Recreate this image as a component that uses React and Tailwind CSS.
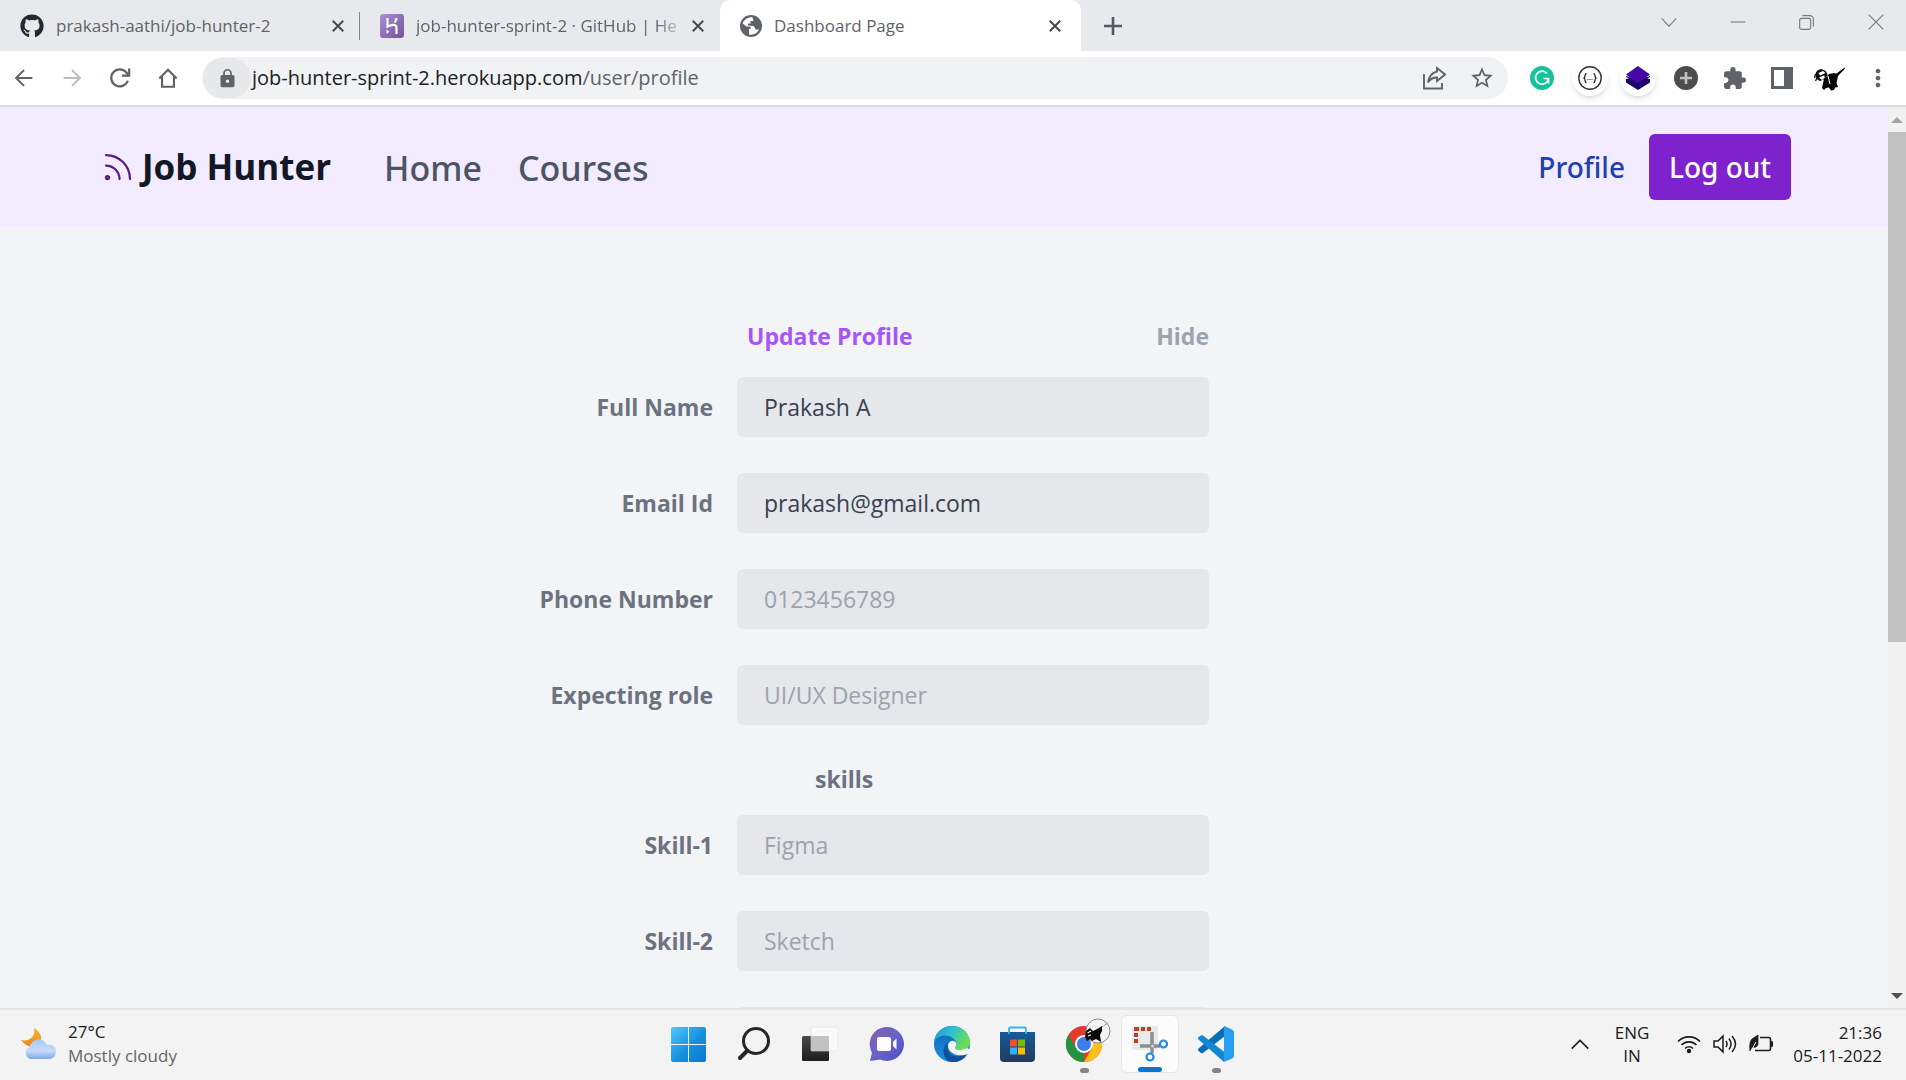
import React from "react";
import { Rss } from "lucide-react";
import { FaGithub } from "react-icons/fa";
import { MdLock, MdExtension, MdMoreVert, MdStarBorder } from "react-icons/md";

function Glyph({ d, size = 20, w = 2 }) {
  return (
    <svg width={size} height={size} viewBox="0 0 24 24" fill="none" stroke="currentColor" strokeWidth={w} aria-hidden="true">
      <path d={d} />
    </svg>
  );
}

const CROSS = "M5 5L19 19M19 5L5 19";

function HerokuIcon() {
  return (
    <svg width="24" height="24" viewBox="0 0 24 24" className="shrink-0" aria-hidden="true">
      <defs>
        <linearGradient id="hk" x1="0" y1="0" x2="1" y2="1">
          <stop offset="0" stopColor="#a98fd0" />
          <stop offset="1" stopColor="#75519e" />
        </linearGradient>
      </defs>
      <rect width="24" height="24" rx="3" fill="url(#hk)" />
      <path d="M7.5 4V12.5C11 11 16.5 9.5 16.5 13.5V20" fill="none" stroke="#fff" strokeWidth="2.2" />
      <path d="M16.5 4C16.5 6 15.5 7.5 14.5 8.5" fill="none" stroke="#fff" strokeWidth="2.2" />
      <path d="M6.5 15.5L9.5 17.8L6.5 20Z" fill="#fff" />
    </svg>
  );
}

function GlobeIcon() {
  return (
    <svg width="22" height="22" viewBox="0 0 22 22" className="shrink-0" aria-hidden="true">
      <circle cx="11" cy="11" r="11" fill="#5f6368" />
      <path d="M12.5 2.2C8 1.8 3.8 4.5 2.6 8.5L6.5 11.5H10.5V14H9V19.5C13 20.5 17.5 18 19 14.5H15.5C15 13.5 14.8 11.5 13 11L8 10.5V8.5H10.5V6H13.5Z" fill="#fff" />
    </svg>
  );
}

function Tab({ icon, title, active, fade, divider }) {
  return (
    <div className={active ? "flex h-full w-[361px] items-center rounded-t-[10px] bg-white pl-5 pr-4" : "relative flex h-full w-[360px] items-center pl-5 pr-3"}>
      {icon}
      <span className={fade ? "ml-3 flex-1 overflow-hidden whitespace-nowrap [mask-image:linear-gradient(to_right,black_88%,transparent)]" : "ml-3 flex-1 overflow-hidden whitespace-nowrap"}>{title}</span>
      <button aria-label="Close tab" className="flex size-5 shrink-0 items-center justify-center text-[#45484c]">
        <Glyph d={CROSS} size={18} w={2.6} />
      </button>
      {divider && <span className="absolute right-0 top-3 h-7 w-px bg-[#80858b]" />}
    </div>
  );
}

function TabStrip() {
  return (
    <div className="flex h-[51px] items-center bg-[#e8e9ed] text-[17px] text-[#5f6368]">
      <Tab icon={<FaGithub size={24} color="#24292f" className="shrink-0" />} title="prakash-aathi/job-hunter-2" divider />
      <Tab icon={<HerokuIcon />} title="job-hunter-sprint-2 · GitHub | He" fade />
      <Tab icon={<GlobeIcon />} title="Dashboard Page" active />
      <button aria-label="New tab" className="ml-5 flex size-6 items-center justify-center text-[#55585c]">
        <Glyph d="M12 3V21M3 12H21" size={24} w={2.6} />
      </button>
      <div className="ml-auto flex items-center gap-[9px] pb-2 text-[#74777b]">
        <button aria-label="Search tabs" className="flex w-[60px] justify-center"><Glyph d="M4 8L12 16.5L20 8" size={22} w={1.2} /></button>
        <button aria-label="Minimize" className="flex w-[60px] justify-center"><Glyph d="M4 12H20" size={22} w={1.2} /></button>
        <button aria-label="Restore" className="flex w-[60px] justify-center">
          <Glyph d="M6 8H14A2 2 0 0 1 16 10V18A2 2 0 0 1 14 20H6A2 2 0 0 1 4 18V10A2 2 0 0 1 6 8ZM7 5H15A4 4 0 0 1 19 9V17" size={22} w={1.2} />
        </button>
        <button aria-label="Close" className="flex w-[60px] justify-center"><Glyph d="M4 4L20 20M20 4L4 20" size={22} w={1.2} /></button>
      </div>
    </div>
  );
}

function Ninja() {
  return (
    <svg width="32" height="32" viewBox="0 0 32 32" aria-hidden="true">
      <path d="M30.5 5.5L22 11.5L20 11L15 12L10 17L8 26L10 28L12 26L15 25.5L17 28.5L20 28L21 25.5L24 25L22.500 21L24 14L31 6.5Z" fill="#050505" />
      <path d="M1.5 13C1.5 9 5 6.5 8.5 7.5C11.5 8 13 10 13.5 13L11 17L6 19C3 18 1.5 16 1.5 13Z" fill="#111" />
      <path d="M4.5 11L9 9L11.5 11L6 13.5ZM5 15.5L10 13.5L11 15.5L8 18Z" fill="#fff" />
      <path d="M14 14L16 22" stroke="#fff" strokeWidth="1" />
      <path d="M22 11L30 5" stroke="#fff" strokeWidth="1.2" />
      <path d="M1.5 12L.5 16M3 16L1.5 19" stroke="#222" strokeWidth="1.4" />
    </svg>
  );
}

function Toolbar() {
  const nav = "flex w-12 justify-center text-[#5f6368]";
  return (
    <div className="flex h-14 shrink-0 items-center border-b-2 border-[#dadbe3] bg-white">
      <button aria-label="Back" className={nav}><Glyph d="M22 12H3M12 2.5L2.5 12L12 21.5" size={20} w={2.4} /></button>
      <button aria-label="Forward" className="flex w-12 justify-center text-[#babcbe]"><Glyph d="M2 12H21M12 2.5L21.5 12L12 21.5" size={20} w={2.4} /></button>
      <button aria-label="Reload" className={nav}><Glyph d="M20.5 15A9.3 9.3 0 1 1 19 6L21 8.5M22 1.5V9.3H14" size={22} w={2.4} /></button>
      <button aria-label="Home" className={nav}><Glyph d="M2.5 12.5L12 3L21.5 12.5M5.5 10V21.5H18.5V10" size={22} w={2.3} /></button>
      <div className="ml-[10px] flex h-[42px] flex-1 items-center rounded-full bg-[#f0f2f4] pr-[14px]">
        <button aria-label="Site information" className="ml-px flex h-10 w-12 shrink-0 items-center justify-center rounded-full bg-[#e6e8ea] text-[#5f6368]">
          <MdLock size={21} />
        </button>
        <button className="flex-1 cursor-text pl-px text-left text-[20px] text-[#202124]">job-hunter-sprint-2.herokuapp.com<span className="text-[#5f6368]">/user/profile</span></button>
        <button aria-label="Share" className="mr-3 flex w-12 shrink-0 justify-center text-[#5f6368]">
          <Glyph d="M2 8V22.5H20V17M15 2L23 8.5L15 15V11.5C11 11.5 8 13 6 16.5C7 10 10.5 6.5 15 5.5Z" size={24} w={1.9} />
        </button>
        <button aria-label="Bookmark" className="flex w-6 shrink-0 justify-center text-[#5f6368]"><MdStarBorder size={26} className="shrink-0" /></button>
      </div>
      <div className="ml-[10px] mr-1 flex items-center text-[#5f6368]">
        <button aria-label="Grammar checker" className="flex w-12 justify-center">
          <svg width="24" height="24" viewBox="0 0 24 24" fill="none">
            <circle cx="12" cy="12" r="12" fill="#15c39a" />
            <path d="M17 7.5A6.5 6.5 0 1 0 18.5 12.5H13.5M18.5 12.5V17.5" stroke="#fff" strokeWidth="1.7" />
          </svg>
        </button>
        <button aria-label="JSON viewer" className="flex w-12 justify-center">
          <svg width="36" height="36" viewBox="0 0 36 36" fill="none" className="rounded-full bg-white shadow-md">
            <circle cx="18" cy="18" r="11.2" stroke="#333" strokeWidth="1.4" />
            <path d="M14.5 13.5C12 13.5 14 17 12 18C14 19 12 22.5 14.5 22.5M21.5 13.5C24 13.5 22 17 24 18C22 19 24 22.5 21.5 22.5" stroke="#222" strokeWidth="1.3" />
            <path d="M15.5 19.5H16.5M17.5 19.5H18.5M19.5 19.5H20.5" stroke="#222" strokeWidth="1.2" />
          </svg>
        </button>
        <button aria-label="Layers" className="flex w-12 justify-center">
          <svg width="36" height="36" viewBox="0 0 36 36" className="rounded-full bg-white shadow-md">
            <path d="M6 16V22.5L18 30L30 22.5V16L18 20Z" fill="#1d0068" />
            <path d="M6 19L9 18.5L6 17ZM30 19L27 18.5L30 17Z" fill="#fff" />
            <path d="M18 6L30 14.5L18 23.5L6 14.5Z" fill="#4607a8" />
          </svg>
        </button>
        <button aria-label="Add" className="flex w-12 justify-center">
          <svg width="24" height="24" viewBox="0 0 24 24">
            <circle cx="12" cy="12" r="12" fill="#4d4d4d" />
            <path d="M12 6V18M6 12H18" stroke="#c4c4c4" strokeWidth="2.6" />
          </svg>
        </button>
        <button aria-label="Extensions" className="flex w-12 justify-center"><MdExtension size={25} /></button>
        <button aria-label="Side panel" className="flex w-12 justify-center">
          <svg width="22" height="22" viewBox="0 0 22 22"><path d="M0 0H22V22H0ZM3 3V19H13V3Z" fill="#5f6368" fillRule="evenodd" /></svg>
        </button>
        <button aria-label="Account" className="flex w-12 justify-center"><Ninja /></button>
        <button aria-label="Menu" className="flex w-12 justify-center"><MdMoreVert size={28} /></button>
      </div>
    </div>
  );
}

function SiteNav() {
  return (
    <nav className="flex h-[120px] shrink-0 items-center bg-[#f3ebff] pl-[100px] pr-[97px] font-medium">
      <a href="#" className="flex items-center gap-[6px] text-[35px] font-bold text-[#111827]">
        <Rss size={36} strokeWidth={1.5} color="#581c87" />
        Job Hunter
      </a>
      <div className="ml-[53px] flex items-center gap-9 pt-[2px] font-['Noto_Sans','Open_Sans',sans-serif] text-[34px] text-[#4b5563]">
        <a href="#home">Home</a>
        <a href="#courses">Courses</a>
      </div>
      <div className="ml-auto flex items-center gap-6 font-['Noto_Sans','Open_Sans',sans-serif] text-[28px]">
        <a href="#profile" className="text-[#1e40af]">Profile</a>
        <button className="h-[66px] w-[142px] rounded-md bg-[#7e22ce] text-white">Log out</button>
      </div>
    </nav>
  );
}

function Field({ id, label, value, placeholder }) {
  return (
    <div className="flex h-[60px] shrink-0 items-center">
      <label htmlFor={id} className="w-1/3 pr-6 text-right font-bold text-[#6b7280]">{label}</label>
      <input id={id} type="text" defaultValue={value} placeholder={placeholder} className="h-full w-2/3 rounded-md bg-[#e5e7eb] px-[27px] text-[#374151] placeholder:text-[#9ca3af]" />
    </div>
  );
}

function ProfileForm() {
  return (
    <div className="flex-1 bg-[#f3f4f6] pr-[178px] pt-[89px]">
      <form className="mx-auto flex max-w-[708px] flex-col text-[23px]">
        <div className="mb-[21px] flex h-10 items-center justify-between pl-[246px] font-bold">
          <h1 className="text-[#a855f7]">Update Profile</h1>
          <button type="button" className="text-[#9ca3af]">Hide</button>
        </div>
        <div className="flex flex-col gap-9">
          <Field id="name" label="Full Name" value="Prakash A" />
          <Field id="email" label="Email Id" value="prakash@gmail.com" />
          <Field id="phone" label="Phone Number" placeholder="0123456789" />
          <Field id="role" label="Expecting role" placeholder="UI/UX Designer" />
        </div>
        <h2 className="mb-4 mt-[34px] flex h-10 items-center pl-[314px] font-bold text-[#6b7280]">skills</h2>
        <div className="flex flex-col gap-9">
          <Field id="s1" label="Skill-1" placeholder="Figma" />
          <Field id="s2" label="Skill-2" placeholder="Sketch" />
          <div className="h-[60px] pl-[236px]">
            <div className="h-full rounded-md bg-[#e5e7eb]" />
          </div>
        </div>
      </form>
    </div>
  );
}

function ScrollBar() {
  return (
    <div className="flex w-[18px] shrink-0 flex-col items-center bg-[#f1f1f1]">
      <button aria-label="Scroll up" className="flex h-[25px] w-full items-center justify-center">
        <svg width="12" height="6" viewBox="0 0 12 6"><path d="M0 6L6 0L12 6Z" fill="#a3a3a3" /></svg>
      </button>
      <div className="h-[510px] w-full bg-[#c1c1c1]" />
      <button aria-label="Scroll down" className="mt-auto flex h-6 w-full items-center justify-center">
        <svg width="12" height="6" viewBox="0 0 12 6"><path d="M0 0L6 6L12 0Z" fill="#505050" /></svg>
      </button>
    </div>
  );
}

function WeatherIcon() {
  return (
    <svg width="36" height="34" viewBox="0 0 36 34" aria-hidden="true">
      <defs>
        <linearGradient id="moon" x1="0" y1="0" x2="0" y2="1"><stop offset="0" stopColor="#f9b233" /><stop offset="1" stopColor="#ee8420" /></linearGradient>
        <linearGradient id="cloud" x1="0" y1="0" x2="0" y2="1"><stop offset="0" stopColor="#a9c6f5" /><stop offset=".6" stopColor="#c6dbfa" /><stop offset="1" stopColor="#7fa4e6" /></linearGradient>
      </defs>
      <path d="M13 1C19 4 22 11 19 16C16 22 6 21 0 13C8 15 15 10 13 1Z" fill="url(#moon)" />
      <path d="M10 32A6 6 0 0 1 8.5 20.5C10 14 15 12 19 12.5C23 13 25 16 26 18C32 17 35.5 21 35 25C34.5 30 31 32 28 32Z" fill="url(#cloud)" />
    </svg>
  );
}

function WindowsIcon() {
  return (
    <svg width="35" height="35" viewBox="0 0 35 35" aria-hidden="true">
      <defs><linearGradient id="win" gradientUnits="userSpaceOnUse" x1="0" y1="0" x2="35" y2="35"><stop offset="0" stopColor="#4cc9fb" /><stop offset=".55" stopColor="#1690de" /><stop offset="1" stopColor="#0a78d0" /></linearGradient></defs>
      <path d="M2 0H17V17H0V2A2 2 0 0 1 2 0ZM18 0H33A2 2 0 0 1 35 2V17H18ZM0 18H17V35H2A2 2 0 0 1 0 33ZM18 18H35V33A2 2 0 0 1 33 35H18Z" fill="url(#win)" />
    </svg>
  );
}

function SearchIcon() {
  return (
    <svg width="34" height="36" viewBox="0 0 34 36" fill="none" stroke="#262626" aria-hidden="true">
      <circle cx="19" cy="15" r="12.5" strokeWidth="3" />
      <path d="M10 25L3 32" strokeWidth="4" strokeLinecap="round" />
    </svg>
  );
}

function TaskViewIcon() {
  return (
    <svg width="36" height="36" viewBox="0 0 36 36" aria-hidden="true">
      <defs>
        <linearGradient id="tvb" x1="0" y1="0" x2="0" y2="1"><stop offset="0" stopColor="#4a4a4a" /><stop offset="1" stopColor="#1c1c1c" /></linearGradient>
      </defs>
      <rect x="0" y="10" width="27" height="25" rx="1.5" fill="url(#tvb)" />
      <rect x="9" y="1" width="27" height="24" rx="1" fill="#fafafa" stroke="#ddd" strokeWidth=".6" />
      <rect x="9" y="10" width="18" height="15" fill="#c2c2c2" />
    </svg>
  );
}

function ChatIcon() {
  return (
    <svg width="35" height="36" viewBox="0 0 35 36" aria-hidden="true">
      <defs><linearGradient id="chat" x1="0" y1="0" x2="1" y2="1"><stop offset="0" stopColor="#8561a8" /><stop offset=".5" stopColor="#6a63c8" /><stop offset="1" stopColor="#4c50c4" /></linearGradient></defs>
      <path d="M17.5 1A17 17 0 1 1 11 33.5L1 35L3 26.5A17 17 0 0 1 17.5 1Z" fill="url(#chat)" />
      <rect x="8" y="11" width="14" height="14" rx="2" fill="#fff" />
      <path d="M24 16L27.5 12.5V23.5L24 20Z" fill="#fff" />
    </svg>
  );
}

function EdgeIcon() {
  return (
    <svg width="36" height="36" viewBox="0 0 36 36" aria-hidden="true">
      <defs>
        <linearGradient id="e1" x1="0" y1="0" x2="1" y2=".5"><stop offset="0" stopColor="#1b96dd" /><stop offset=".5" stopColor="#2dc2d0" /><stop offset="1" stopColor="#6be04c" /></linearGradient>
        <linearGradient id="e2" x1="0" y1="0" x2="0" y2="1"><stop offset="0" stopColor="#0f66b5" /><stop offset="1" stopColor="#1a8fe0" /></linearGradient>
      </defs>
      <circle cx="18" cy="18" r="18" fill="url(#e2)" />
      <path d="M0 16C1 6 9 0 18 0C29 0 36 8 36 16C36 21 32 24.5 27 24.5C23 24.5 20.5 23.5 21 22C23 20 23 16 20 13C14 7 3 9 0 16Z" fill="url(#e1)" />
      <path d="M14 16C11 24 17 31.5 25 30C29 29.5 32 28 34 27C30 35 21 38 14 35C8 30 8 21 14 16Z" fill="#124f97" />
      <path d="M14 19C15 14.5 20 13 22 17C23 19.5 21.5 21 21 22C21 24 27 25.5 33 22L37 24L33.5 28C27 31 14 29 14 19Z" fill="#f3f3f3" />
    </svg>
  );
}

function StoreIcon() {
  return (
    <svg width="36" height="36" viewBox="0 0 36 36" aria-hidden="true">
      <defs><linearGradient id="st" x1="0" y1="0" x2="0" y2="1"><stop offset="0" stopColor="#155a9c" /><stop offset="1" stopColor="#243a5e" /></linearGradient></defs>
      <path d="M0 6H35V32A4 4 0 0 1 31 36H4A4 4 0 0 1 0 32Z" fill="url(#st)" />
      <path d="M9 8V3A1.5 1.5 0 0 1 10.5 1.5H24.5A1.5 1.5 0 0 1 26 3V8" fill="none" stroke="#35b3ea" strokeWidth="1.8" />
      <path d="M10 13.5H17V20.5H10Z" fill="#f25022" />
      <path d="M18 13.5H25V20.5H18Z" fill="#7fba00" />
      <path d="M10 21.5H17V28.5H10Z" fill="#32b1f4" />
      <path d="M18 21.5H25V28.5H18Z" fill="#ffb900" />
    </svg>
  );
}

function ChromeIcon() {
  return (
    <svg width="36" height="36" viewBox="0 0 36 36" className="overflow-visible" aria-hidden="true">
      <circle cx="18" cy="18" r="18" fill="#e33b2e" />
      <path d="M2.4 9L10.2 22.5L18 27L18 36A18 18 0 0 1 2.4 9Z" fill="#229342" />
      <path d="M18 9H33.6A18 18 0 0 1 18 36L25.8 22.5Z" fill="#fbc116" />
      <circle cx="18" cy="18" r="9" fill="#fff" />
      <circle cx="18" cy="18" r="7" fill="#3d7cea" />
      <circle cx="32" cy="5" r="12" fill="#f4f4f4" stroke="#8a8a8a" strokeWidth="1" />
      <path d="M36 0L33 2L31 3L27 5L24 2L20 5L19 11L21 15L24 13L26 15L30 13L35 16L34 9L36 5Z" fill="#080808" />
      <path d="M36 1L42 -3" stroke="#999" strokeWidth="1" />
      <path d="M21.5 7L25 5M22 10L25 9" stroke="#fff" strokeWidth="1.3" />
    </svg>
  );
}

function SnipIcon() {
  return (
    <svg width="36" height="36" viewBox="0 0 36 36" className="overflow-visible" aria-hidden="true">
      <rect x="0" y="2" width="26" height="24" rx="2" fill="#e9e9eb" />
      <path d="M2 5H7M9 5H13M15 5H19" stroke="#c43e1c" strokeWidth="4" />
      <path d="M4 9V13M4 15V19" stroke="#c43e1c" strokeWidth="4" />
      <path d="M20 8V29M8 22H28" stroke="#8b8f94" strokeWidth="3.5" />
      <circle cx="20.5" cy="22" r="1.5" fill="#d3d5d7" />
      <circle cx="31.5" cy="20" r="3.5" fill="#fff" stroke="#1a8fdc" strokeWidth="2.2" />
      <circle cx="18" cy="33" r="3.5" fill="#fff" stroke="#1a8fdc" strokeWidth="2.2" />
    </svg>
  );
}

function CodeIcon() {
  return (
    <svg width="36" height="36" viewBox="0 0 36 36" aria-hidden="true">
      <path d="M.5 22.5Q-.5 24 .5 25L3 27Q4 27.5 5 27L27 10V0L.5 22.5Z" fill="#0a6db5" />
      <path d="M.5 11Q-.5 12 .5 13.5L26 36L27 26.5L5 9.5Q4 9 3 9.5Z" fill="#1387d0" />
      <path d="M26 0L34 3.5Q36 4.5 36 6V30Q36 31.5 34 32.5L26 36Z" fill="#26a0ee" />
    </svg>
  );
}

const APPS = [
  { name: "Start", icon: <WindowsIcon /> },
  { name: "Search", icon: <SearchIcon /> },
  { name: "Task view", icon: <TaskViewIcon /> },
  { name: "Chat", icon: <ChatIcon /> },
  { name: "Edge", icon: <EdgeIcon /> },
  { name: "Store", icon: <StoreIcon /> },
  { name: "Chrome", icon: <ChromeIcon />, running: true },
  { name: "Snipping Tool", icon: <SnipIcon />, active: true },
  { name: "Code", icon: <CodeIcon />, running: true },
];

function Taskbar() {
  return (
    <footer className="grid h-[72px] shrink-0 grid-cols-[1fr_auto_1fr] items-center border-t-2 border-[#e5e5e5] bg-[#f3f3f3] pb-[2px] text-[17px] text-[#1b1b1b]">
      <div className="flex items-center gap-[11px] pl-[21px]">
        <WeatherIcon />
        <div className="leading-6">
          <p>27°C</p>
          <p className="text-[#666666]">Mostly cloudy</p>
        </div>
      </div>
      <div className="flex items-center gap-2 pr-[2px]">
        {APPS.map((a) => (
          <button key={a.name} aria-label={a.name} className={a.active ? "relative flex h-[58px] w-[58px] items-center justify-center rounded-md border border-[#e6e6e6] bg-[#fbfbfb] pb-1" : "relative flex h-[58px] w-[58px] items-center justify-center"}>
            {a.icon}
            {a.running && <span className="absolute bottom-0 h-[5px] w-[9px] rounded-full bg-[#858585]" />}
            {a.active && <span className="absolute bottom-0 h-[5px] w-6 rounded-full bg-[#0b74cf]" />}
          </button>
        ))}
      </div>
      <div className="flex items-center justify-end pr-6">
        <button aria-label="Hidden icons" className="mr-6"><Glyph d="M3 17L12 8L21 17" size={22} w={1.7} /></button>
        <p className="mr-7 text-center leading-[23px]">ENG<br />IN</p>
        <div className="mr-5 flex items-center gap-3">
          <svg width="24" height="20" viewBox="0 0 24 20" fill="none" stroke="#1b1b1b" strokeWidth="1.6" aria-hidden="true">
            <path d="M1 7.5A15.5 15.5 0 0 1 23 7.5M4.5 11A10.5 10.5 0 0 1 19.5 11M8 14.5A5.6 5.6 0 0 1 16 14.5" />
            <circle cx="12" cy="17" r="1.4" fill="#1b1b1b" />
          </svg>
          <svg width="24" height="20" viewBox="0 0 24 20" fill="none" stroke="#1b1b1b" strokeWidth="1.5" aria-hidden="true">
            <path d="M1 7V13H5L10 18V2L5 7ZM13 7Q15 10 13 13M16 4.5Q20 10 16 15.5M19 2Q26 10 19 18" />
          </svg>
          <svg width="24" height="20" viewBox="0 0 24 20" fill="none" stroke="#1b1b1b" strokeWidth="1.6" aria-hidden="true">
            <path d="M11 3.5H19.5A2 2 0 0 1 21.5 5.5V14.5A2 2 0 0 1 19.5 16.5H6" />
            <path d="M22 8H24V12H22Z" fill="#1b1b1b" />
            <path d="M9 1V9C9 13 6 14 3 13L1 17Q0 8 3 5Z" fill="#1b1b1b" strokeWidth=".8" />
            <path d="M2 17L7 8" stroke="#f3f3f3" strokeWidth="1" />
          </svg>
        </div>
        <p className="text-right leading-[23px]">21:36<br />05-11-2022</p>
      </div>
    </footer>
  );
}

export default function App() {
  return (
    <div className="flex h-screen flex-col overflow-hidden font-['Open_Sans','Noto_Sans',sans-serif]">
      <TabStrip />
      <Toolbar />
      <main className="flex min-h-0 flex-1 overflow-hidden">
        <div className="flex min-w-0 flex-1 flex-col overflow-hidden">
          <SiteNav />
          <ProfileForm />
        </div>
        <ScrollBar />
      </main>
      <Taskbar />
    </div>
  );
}
